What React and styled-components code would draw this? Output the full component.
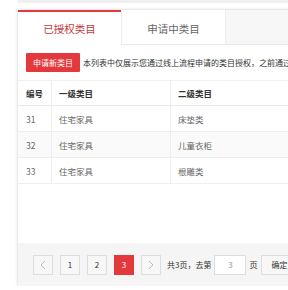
import React from 'react';
import styled, {createGlobalStyle} from 'styled-components';

const GlobalStyle = createGlobalStyle`
    html, body {
        margin: 0;
        padding: 0;
        background: #fff;
        overflow: hidden;
    }
    body {
        font-family: "Noto Sans CJK SC", "Noto Sans", sans-serif;
        color: #333;
    }
`;

const TopStrip = styled.div`
    height: 3px;
    margin-left: 18px;
    background-color: #f0f0f0;
`;

const Panel = styled.div`
    margin: 7px 0 0 18px;
    width: 340px;
    background-color: #fff;
    box-shadow: 0 0 3px rgba(0, 0, 0, 0.22);
`;

const TabBar = styled.div`
    display: flex;
    height: 35px;
    background-color: #f7f7f7;
`;

const Tab = styled.div`
    box-sizing: border-box;
    width: ${p => p.active ? '103px' : '104px'};
    display: flex;
    align-items: center;
    justify-content: center;
    font-size: 10.5px;
    background-color: #fff;
    color: ${p => p.active ? '#c4383a' : '#666'};
    border-top: 2px solid ${p => p.active ? '#e4393c' : 'transparent'};
    border-left: ${p => p.active ? '0' : '1px solid #eee'};
    border-bottom: ${p => p.active ? '0' : '1px solid #e8e8e8'};
`;

const TabRest = styled.div`
    flex: 1;
    border-bottom: 1px solid #e8e8e8;
    border-left: 1px solid #eee;
`;

const Toolbar = styled.div`
    display: flex;
    align-items: center;
    gap: 3px;
    padding: 8px 8px 0 8px;
    white-space: nowrap;
`;

const RedButton = styled.button`
    height: 19px;
    padding: 0 7px;
    border: 0;
    border-radius: 1px;
    background-color: #e4393c;
    color: #fff;
    font: inherit;
    font-size: 8px;
`;

const Note = styled.span`
    font-size: 8px;
    color: #333;
`;

const Table = styled.table`
    margin-top: 8px;
    width: 100%;
    border-collapse: collapse;
    font-size: 8.5px;
`;

const Th = styled.th`
    height: 24px;
    padding: 0 7px;
    text-align: left;
    font-weight: 600;
    color: #333;
    border-top: 1px solid #f0f0f0;
    border-bottom: 1px solid #e8e8e8;
    border-left: 1px solid #eee;
    width: ${p => p.w || 'auto'};
    &:first-child {
        border-left: 0;
        padding-left: 8px;
    }
`;

const Tr = styled.tr`
    background-color: ${p => p.striped ? '#fafafa' : '#fff'};
`;

const Td = styled.td`
    height: 25px;
    padding: 0 7px;
    color: #666;
    border-bottom: 1px solid #eee;
    border-left: 1px solid #eee;
    &:first-child {
        border-left: 0;
        padding-left: 8px;
    }
`;

const Spacer = styled.div`
    height: 59px;
`;

const Footer = styled.div`
    display: flex;
    align-items: center;
    gap: 7px;
    height: 43px;
    padding-left: 15px;
    background-color: #f5f5f5;
    white-space: nowrap;
`;

const PageButton = styled.div`
    box-sizing: border-box;
    width: 20px;
    height: 20px;
    display: flex;
    align-items: center;
    justify-content: center;
    font-size: 8px;
    color: ${p => p.current ? '#fff' : p.muted ? '#bbb' : '#333'};
    background-color: ${p => p.current ? '#e4393c' : '#f7f7f7'};
    border: 1px solid ${p => p.current ? '#e4393c' : '#ddd'};
`;

const GoTo = styled.div`
    display: flex;
    align-items: center;
    gap: 3px;
    margin-left: -1px;
`;

const PageText = styled.span`
    font-size: 8px;
    color: #333;
`;

const PageInput = styled.div`
    box-sizing: border-box;
    width: 32px;
    height: 20px;
    display: flex;
    align-items: center;
    justify-content: center;
    font-size: 8px;
    color: #999;
    background-color: #fff;
    border: 1px solid #ddd;
`;

const ConfirmButton = styled.div`
    box-sizing: border-box;
    height: 20px;
    padding: 0 9px;
    margin-left: 1px;
    display: flex;
    align-items: center;
    font-size: 8px;
    color: #333;
    background-color: #f7f7f7;
    border: 1px solid #ddd;
`;

const Arrow = ({dir}) => (
    <svg width="6" height="10" viewBox="0 0 6 10">
        <path
            d={dir === 'left' ? 'M5 1 L1 5 L5 9' : 'M1 1 L5 5 L1 9'}
            fill="none"
            stroke="#bbb"
            strokeWidth="1"
        />
    </svg>
);

const rows = [
    {id: 31, first: '住宅家具', second: '床垫类'},
    {id: 32, first: '住宅家具', second: '儿童衣柜'},
    {id: 33, first: '住宅家具', second: '根雕类'},
];

export default function App() {
    return (
        <>
            <GlobalStyle/>
            <TopStrip/>
            <Panel>
                <TabBar>
                    <Tab active>已授权类目</Tab>
                    <Tab>申请中类目</Tab>
                    <TabRest/>
                </TabBar>
                <Toolbar>
                    <RedButton>申请新类目</RedButton>
                    <Note>本列表中仅展示您通过线上流程申请的类目授权，之前通过线下申请的类目授权不在此展示</Note>
                </Toolbar>
                <Table>
                    <thead>
                        <tr>
                            <Th w="18px">编号</Th>
                            <Th w="104px">一级类目</Th>
                            <Th>二级类目</Th>
                        </tr>
                    </thead>
                    <tbody>
                        {rows.map((r, i) => (
                            <Tr key={r.id} striped={i % 2 === 1}>
                                <Td>{r.id}</Td>
                                <Td>{r.first}</Td>
                                <Td>{r.second}</Td>
                            </Tr>
                        ))}
                    </tbody>
                </Table>
                <Spacer/>
                <Footer>
                    <PageButton muted><Arrow dir="left"/></PageButton>
                    <PageButton>1</PageButton>
                    <PageButton>2</PageButton>
                    <PageButton current>3</PageButton>
                    <PageButton muted><Arrow dir="right"/></PageButton>
                    <GoTo>
                        <PageText>共3页，去第</PageText>
                        <PageInput>3</PageInput>
                        <PageText>页</PageText>
                        <ConfirmButton>确定</ConfirmButton>
                    </GoTo>
                </Footer>
            </Panel>
        </>
    );
}
